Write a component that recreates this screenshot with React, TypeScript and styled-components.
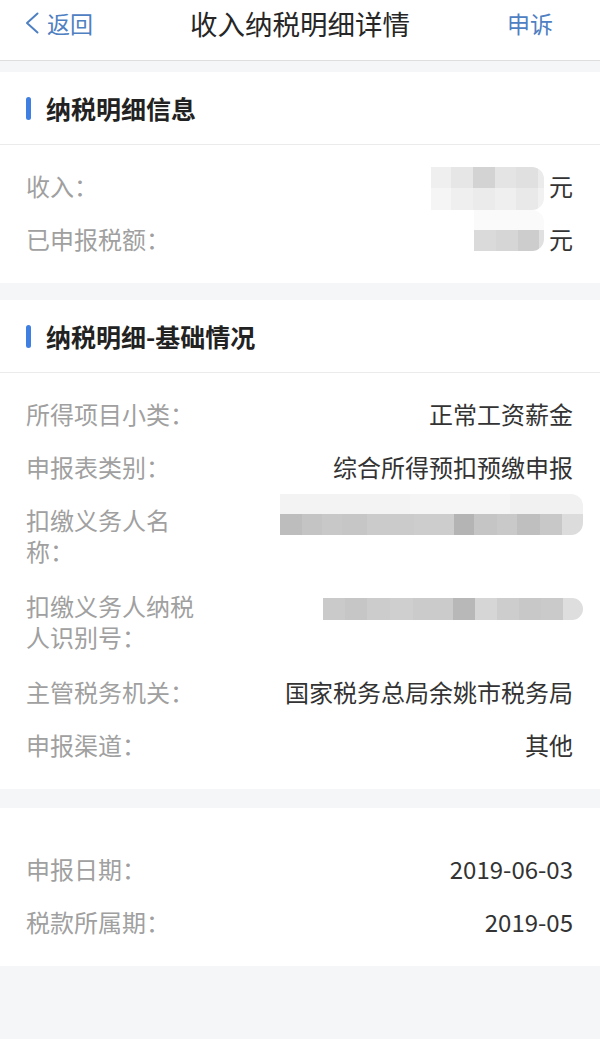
import React from "react";
import styled, { createGlobalStyle } from "styled-components";

const GlobalStyle = createGlobalStyle`
  html, body {
    margin: 0;
    padding: 0;
    background: #f5f6f8;
  }
  body {
    font-family: "Noto Sans CJK SC", "Noto Sans", sans-serif;
    -webkit-font-smoothing: antialiased;
  }
  * { box-sizing: border-box; }
`;

const Page = styled.div`
  width: 600px;
  min-height: 1039px;
  background: #f5f6f8;
  display: flex;
  flex-direction: column;
`;

const NavBar = styled.header`
  height: 61px;
  background: #ffffff;
  border-bottom: 1px solid #dedede;
  display: grid;
  grid-template-columns: 1fr auto 1fr;
  align-items: center;
  padding: 0 25px 14px 25px;
`;

const BackButton = styled.div`
  display: flex;
  align-items: center;
  gap: 8px;
  color: #4f80c2;
  font-size: 23px;
  line-height: 30px;
`;

const NavTitle = styled.h1`
  margin: 0;
  font-size: 27.5px;
  font-weight: 400;
  color: #262626;
  line-height: 34px;
`;

const NavAction = styled.div`
  justify-self: end;
  padding-right: 22px;
  color: #4f80c2;
  font-size: 23px;
  line-height: 30px;
`;

const Section = styled.section<{ $gap: number }>`
  margin-top: ${(p) => p.$gap}px;
  background: #ffffff;
`;

const SectionHeader = styled.div`
  height: 73px;
  display: flex;
  align-items: center;
  gap: 15px;
  padding-left: 26px;
  border-bottom: 1px solid #ebebeb;
`;

const Accent = styled.span`
  width: 5px;
  height: 23px;
  border-radius: 3px;
  background: #3f7fe2;
`;

const SectionTitle = styled.h2`
  margin: 0 0 1px;
  font-size: 25px;
  font-weight: 700;
  color: #222222;
  line-height: 32px;
`;

const SectionBody = styled.div<{ $pt?: number }>`
  padding: ${(p) => p.$pt ?? 15}px 27px 17px 26px;
  display: flex;
  flex-direction: column;
`;

const Row = styled.div<{ $multi?: boolean }>`
  display: flex;
  justify-content: space-between;
  align-items: ${(p) => (p.$multi ? "flex-start" : "center")};
  padding: ${(p) => (p.$multi ? "10px 0 14px" : "10px 0 12px")};
`;

const Label = styled.div`
  width: 180px;
  flex-shrink: 0;
  font-size: 24px;
  line-height: 31px;
  color: #a0a0a0;
`;

const Value = styled.div`
  font-size: 24px;
  line-height: 31px;
  color: #333333;
  text-align: right;
  display: flex;
  align-items: center;
  justify-content: flex-end;
  gap: 5px;
`;

/* the slot keeps the row's line height; the pixelated blur spills over it */
const MosaicSlot = styled.div<{ $mr: number }>`
  height: 31px;
  display: flex;
  align-items: center;
  margin-right: ${(p) => p.$mr}px;
`;

const MosaicBox = styled.div<{ $dy: number }>`
  display: flex;
  flex-direction: column;
  transform: translateY(${(p) => p.$dy}px);
  border-radius: 0 12px 12px 0;
  overflow: hidden;
  filter: blur(0.6px);
`;

const MosaicRow = styled.div<{ $h: number }>`
  display: flex;
  height: ${(p) => p.$h}px;
`;

const MosaicCell = styled.span<{ $w: number; $c: string }>`
  width: ${(p) => p.$w}px;
  height: 100%;
  background: ${(p) => p.$c};
`;

type Band = { h: number; cells: [number, string][] };

const Mosaic: React.FC<{ bands: Band[]; dy?: number; mr?: number }> = ({
  bands,
  dy = 0,
  mr = 0,
}) => (
  <MosaicSlot $mr={mr}>
    <MosaicBox $dy={dy}>
      {bands.map((b, i) => (
        <MosaicRow key={i} $h={b.h}>
          {b.cells.map(([w, c], j) => (
            <MosaicCell key={j} $w={w} $c={c} />
          ))}
        </MosaicRow>
      ))}
    </MosaicBox>
  </MosaicSlot>
);

const Chevron = () => (
  <svg width="14" height="22" viewBox="0 0 14 22" fill="none">
    <polyline
      points="12.5,1.5 2,11 12.5,20.5"
      stroke="#4f80c2"
      strokeWidth="2"
      strokeLinecap="round"
      strokeLinejoin="round"
    />
  </svg>
);

const incomeMosaic: Band[] = [
  {
    h: 21,
    cells: [
      [20, "#efefef"],
      [22, "#e6e6e6"],
      [22, "#d3d3d3"],
      [21, "#e4e4e4"],
      [22, "#e0e0e0"],
      [6, "#ebebeb"],
    ],
  },
  {
    h: 22,
    cells: [
      [20, "#f5f5f5"],
      [22, "#efefef"],
      [22, "#ebebeb"],
      [21, "#efefef"],
      [22, "#e9e9e9"],
      [6, "#f1f1f1"],
    ],
  },
];

const taxMosaic: Band[] = [
  { h: 20, cells: [[70, "#fafafa"]] },
  {
    h: 21,
    cells: [
      [22, "#dadada"],
      [22, "#d6d6d6"],
      [21, "#cdcdcd"],
      [5, "#e0e0e0"],
    ],
  },
];

const agentNameMosaic: Band[] = [
  {
    h: 20,
    cells: [
      [130, "#f3f3f3"],
      [100, "#f5f5f5"],
      [73, "#f1f1f1"],
    ],
  },
  {
    h: 21,
    cells: [
      [22, "#bdbdbd"],
      [20, "#c4c4c4"],
      [20, "#c8c8c8"],
      [25, "#c6c6c6"],
      [47, "#cbcbcb"],
      [40, "#cdcdcd"],
      [20, "#b4b4b4"],
      [23, "#c5c5c5"],
      [20, "#c9c9c9"],
      [23, "#bfbfbf"],
      [22, "#c8c8c8"],
      [21, "#dcdcdc"],
    ],
  },
];

const agentIdMosaic: Band[] = [
  {
    h: 22,
    cells: [
      [22, "#cacaca"],
      [22, "#c6c6c6"],
      [23, "#cccccc"],
      [23, "#cfcfcf"],
      [40, "#cbcbcb"],
      [22, "#b8b8b8"],
      [22, "#d6d6d6"],
      [22, "#cdcdcd"],
      [22, "#c8c8c8"],
      [22, "#cacaca"],
      [20, "#dedede"],
    ],
  },
];

export default function App() {
  return (
    <>
      <GlobalStyle />
      <Page>
        <NavBar>
          <BackButton>
            <Chevron />
            返回
          </BackButton>
          <NavTitle>收入纳税明细详情</NavTitle>
          <NavAction>申诉</NavAction>
        </NavBar>

        <Section $gap={11}>
          <SectionHeader>
            <Accent />
            <SectionTitle>纳税明细信息</SectionTitle>
          </SectionHeader>
          <SectionBody>
            <Row>
              <Label>收入：</Label>
              <Value>
                <Mosaic bands={incomeMosaic} dy={3} />
                元
              </Value>
            </Row>
            <Row>
              <Label>已申报税额：</Label>
              <Value>
                <Mosaic bands={taxMosaic} dy={-8} />
                元
              </Value>
            </Row>
          </SectionBody>
        </Section>

        <Section $gap={17}>
          <SectionHeader>
            <Accent />
            <SectionTitle>纳税明细-基础情况</SectionTitle>
          </SectionHeader>
          <SectionBody>
            <Row>
              <Label>所得项目小类：</Label>
              <Value>正常工资薪金</Value>
            </Row>
            <Row>
              <Label>申报表类别：</Label>
              <Value>综合所得预扣预缴申报</Value>
            </Row>
            <Row $multi>
              <Label>扣缴义务人名称：</Label>
              <Value>
                <Mosaic bands={agentNameMosaic} dy={-5} mr={-10} />
              </Value>
            </Row>
            <Row $multi>
              <Label>扣缴义务人纳税人识别号：</Label>
              <Value>
                <Mosaic bands={agentIdMosaic} dy={3} mr={-10} />
              </Value>
            </Row>
            <Row>
              <Label>主管税务机关：</Label>
              <Value>国家税务总局余姚市税务局</Value>
            </Row>
            <Row>
              <Label>申报渠道：</Label>
              <Value>其他</Value>
            </Row>
          </SectionBody>
        </Section>

        <Section $gap={19}>
          <SectionBody $pt={35}>
            <Row>
              <Label>申报日期：</Label>
              <Value>2019-06-03</Value>
            </Row>
            <Row>
              <Label>税款所属期：</Label>
              <Value>2019-05</Value>
            </Row>
          </SectionBody>
        </Section>
      </Page>
    </>
  );
}
